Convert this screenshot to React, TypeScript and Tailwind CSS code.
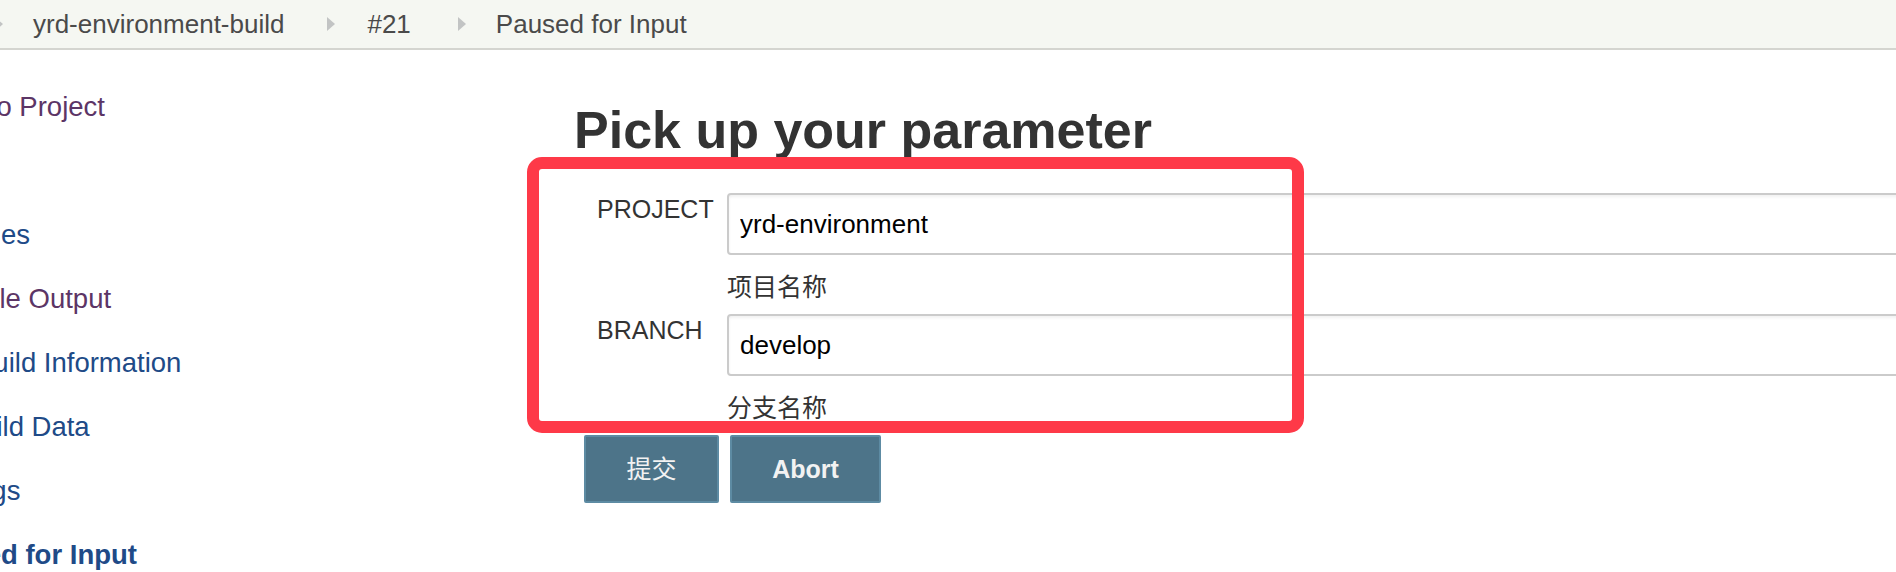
const sans = "font-['Liberation_Sans','Noto_Sans_CJK_SC',sans-serif]";

function Arrow() {
  return (
    <svg width="8" height="14" viewBox="0 0 8 14" className="shrink-0">
      <polygon points="0,0 8,7 0,14" fill="#c2c4c4" />
    </svg>
  );
}

const sideLinks = [
  { label: "Back to Project", color: "text-[#5c3566]" },
  { label: "Status", color: "text-[#204a87]" },
  { label: "Changes", color: "text-[#204a87]" },
  { label: "Console Output", color: "text-[#5c3566]" },
  { label: "Edit Build Information", color: "text-[#204a87]" },
  { label: "Git Build Data", color: "text-[#204a87]" },
  { label: "No Tags", color: "text-[#204a87]" },
  { label: "Paused for Input", color: "text-[#204a87] font-bold" },
];

function Param({ name, value, desc }: { name: string; value: string; desc: string }) {
  return (
    <div>
      <div className="flex items-start">
        <div className="w-[153px] shrink-0 whitespace-nowrap pl-[23px] pt-[2px] text-[25px] leading-[28px] text-[#333]">
          {name}
        </div>
        <input
          type="text"
          defaultValue={value}
          className="h-[62px] w-[1250px] shrink-0 rounded-[4px] border-2 border-[#cbcbcb] bg-white px-[11px] text-[26px] text-black shadow-[inset_0_2px_3px_rgba(0,0,0,0.06)] outline-none"
        />
      </div>
      <div className="ml-[153px] mt-[17px] text-[25px] leading-[30px] text-[#333]">{desc}</div>
    </div>
  );
}

export default function App() {
  return (
    <div className={`relative h-[572px] w-[1896px] overflow-hidden bg-white ${sans}`}>
      <header className="flex h-[50px] items-center border-b-2 border-[#d4d5d0] bg-[#f5f7f2] text-[26px] text-[#4a4a4a]">
        <div className="-ml-[5px] mr-[30px]">
          <Arrow />
        </div>
        <span>yrd-environment-build</span>
        <div className="ml-[43px] mr-[32px]">
          <Arrow />
        </div>
        <span>#21</span>
        <div className="ml-[47px] mr-[30px]">
          <Arrow />
        </div>
        <span>Paused for Input</span>
      </header>

      <div className="flex">
        <aside className="w-[574px] shrink-0 overflow-hidden pt-[25px]">
          <ul className="-ml-[80px]">
            {sideLinks.map((l) => (
              <li key={l.label} className={`flex h-[64px] items-center whitespace-nowrap text-[27.5px] ${l.color}`}>
                {l.label}
              </li>
            ))}
          </ul>
        </aside>

        <main className="pt-[49px]">
          <h1 className="text-[52px] font-bold leading-[1.2] text-[#333]">Pick up your parameter</h1>
          <div className="mt-[32px] flex flex-col gap-[12px]">
            <Param name="PROJECT" value="yrd-environment" desc="项目名称" />
            <Param name="BRANCH" value="develop" desc="分支名称" />
          </div>
          <div className="ml-[10px] mt-[12px] flex gap-[11px]">
            <button className="h-[68px] w-[135px] rounded-[2px] border-2 border-[#5d8ba3] bg-[#4d7489] text-[25px] text-[#f2f2f2]">
              提交
            </button>
            <button className="h-[68px] w-[151px] rounded-[2px] border-2 border-[#5d8ba3] bg-[#4d7489] text-[25px] font-bold text-[#f2f2f2]">
              Abort
            </button>
          </div>
        </main>
      </div>

      {/* annotation box drawn over the form */}
      <div className="pointer-events-none absolute left-[527px] top-[157px] h-[276px] w-[777px] rounded-[15px] border-[12px] border-[#fe3948]" />
    </div>
  );
}
